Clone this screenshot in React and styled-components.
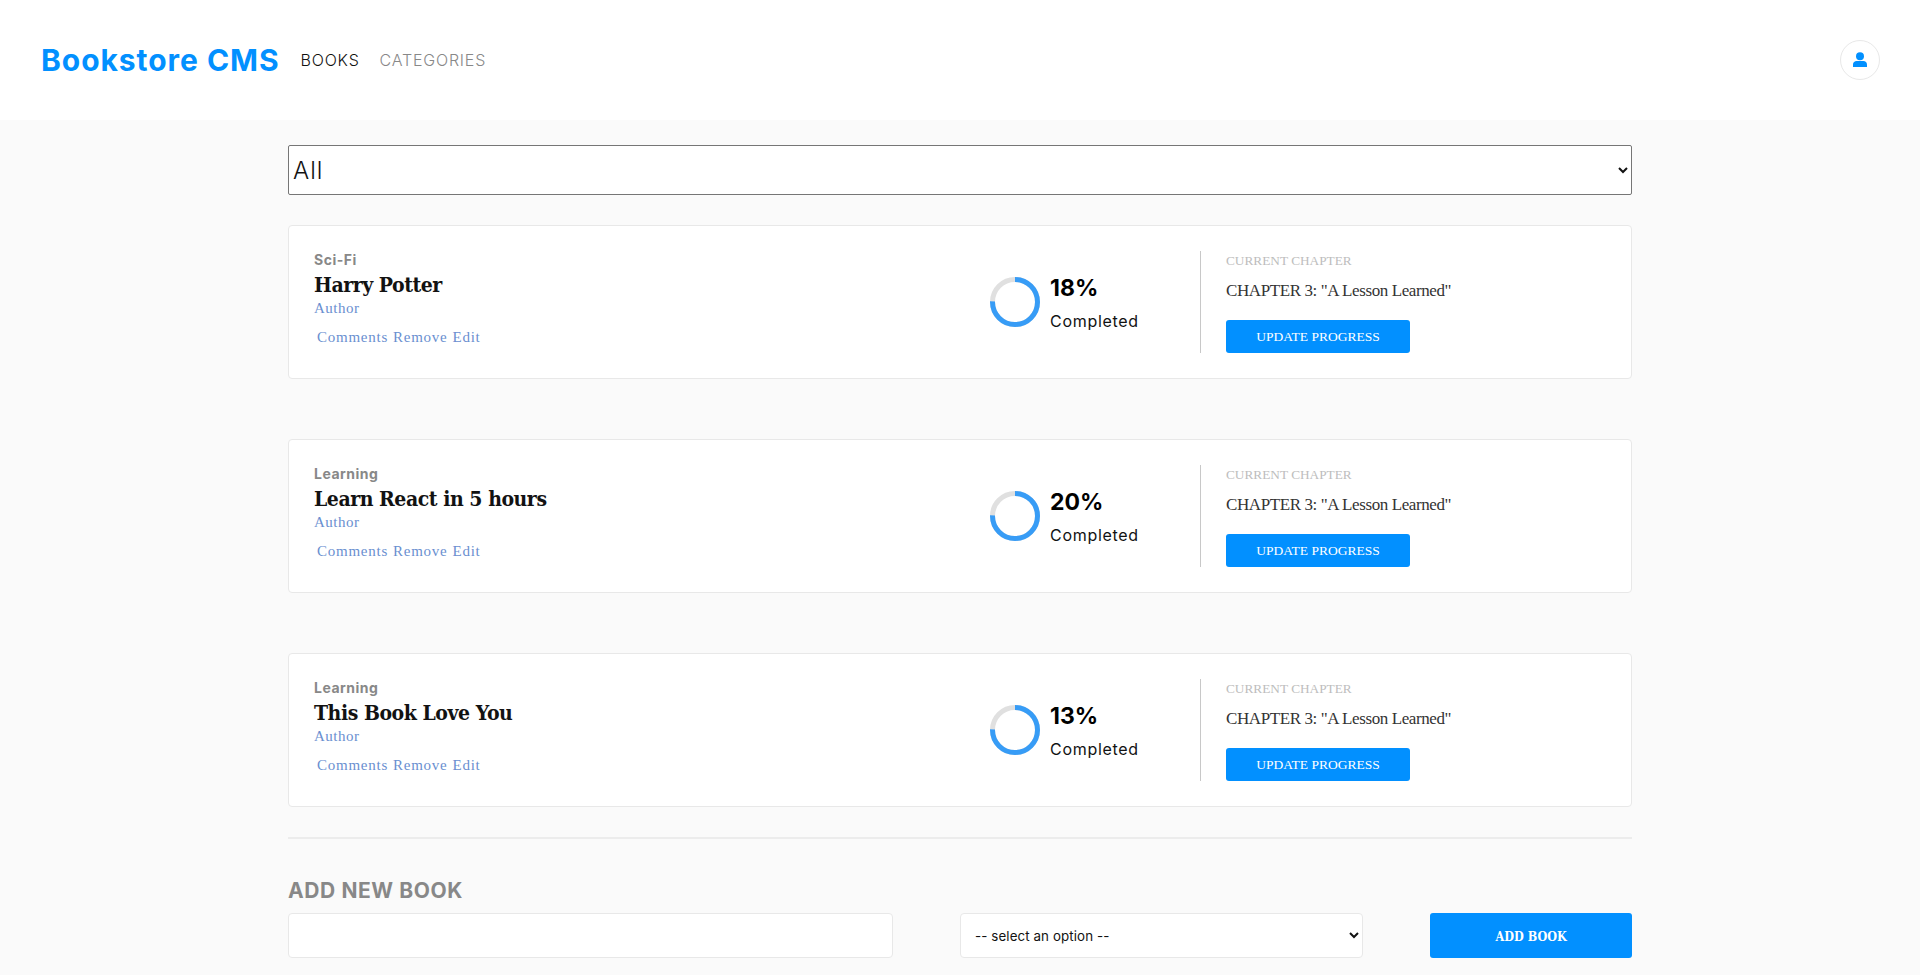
import React from "react";
import styled, { createGlobalStyle } from "styled-components";

const sans = `"Inter", "Noto Sans", sans-serif`;
const slab = `"DejaVu Serif Condensed", "DejaVu Serif", serif`;
const thinSlab = `"Liberation Serif", "DejaVu Serif", serif`;

const GlobalStyle = createGlobalStyle`
  html, body {
    margin: 0;
    padding: 0;
    background: #fafafa;
    overflow: hidden;
  }
`;

const Header = styled.header`
  display: flex;
  align-items: center;
  height: 120px;
  padding: 0 40px 0 41px;
  background: #fff;
  font-family: ${sans};
`;

const Logo = styled.h1`
  margin: 0 21px 0 0;
  font-size: 30px;
  font-weight: 700;
  letter-spacing: 0.95px;
  color: #0290ff;
`;

const NavLink = styled.a`
  margin-right: 20px;
  font-size: 16px;
  font-weight: 300;
  letter-spacing: 0.8px;
  color: ${(p) => (p.$active ? "#121212" : "#888")};
`;

const Profile = styled.div`
  display: flex;
  align-items: center;
  justify-content: center;
  box-sizing: border-box;
  width: 40px;
  height: 40px;
  margin-left: auto;
  border: 1px solid #e8e8e8;
  border-radius: 50%;
`;

const Main = styled.main`
  width: 1344px;
  margin: 0 auto;
  padding-top: 25px;
`;

const Filter = styled.select`
  display: block;
  width: 100%;
  height: 50px;
  background: #fff;
  border: 1px solid #767676;
  border-radius: 2px;
  font-family: ${sans};
  font-size: 24px;
  font-weight: 300;
  letter-spacing: 1px;
  color: #121212;
`;

const BookList = styled.div`
  display: flex;
  flex-direction: column;
  gap: 60px;
  margin-top: 30px;
`;

const Card = styled.article`
  display: flex;
  box-sizing: border-box;
  height: 154px;
  padding: 25px;
  background: #fff;
  border: 1px solid #e8e8e8;
  border-radius: 4px;
`;

const Info = styled.div`
  flex: 1;
`;

const Category = styled.div`
  font-family: ${sans};
  font-size: 14px;
  line-height: 18px;
  font-weight: 700;
  letter-spacing: 0.5px;
  color: #888;
`;

const Title = styled.h2`
  margin: 3px 0 1px;
  font-family: ${slab};
  font-size: 21px;
  line-height: 26px;
  font-weight: 700;
  letter-spacing: -0.45px;
  color: #121212;
`;

const Author = styled.div`
  font-family: ${thinSlab};
  font-size: 15px;
  line-height: 18px;
  letter-spacing: 0.5px;
  color: #6a8fd0;
`;

const Actions = styled.div`
  display: flex;
  gap: 5px;
  margin-top: 11px;
  padding-left: 3px;
`;

const Action = styled.a`
  font-family: ${thinSlab};
  font-size: 15px;
  line-height: 18px;
  letter-spacing: 0.75px;
  color: #6a8fd0;
`;

const Progress = styled.div`
  display: flex;
  align-items: center;
  gap: 10px;
  box-sizing: border-box;
  width: 211px;
  border-right: 1px solid #c8c8c8;
`;

const Ring = styled.svg`
  display: block;
  flex: none;
`;

const Percent = styled.div`
  font-family: ${sans};
  font-size: 23px;
  line-height: 30px;
  font-weight: 700;
  color: #000;
`;

const Completed = styled.div`
  margin-top: 8px;
  font-family: ${sans};
  font-size: 16px;
  line-height: 20px;
  font-weight: 400;
  letter-spacing: 0.7px;
  color: #121212;
`;

const Chapter = styled.div`
  box-sizing: border-box;
  width: 405px;
  padding-left: 25px;
`;

const ChapterLabel = styled.div`
  padding-top: 1px;
  font-family: ${thinSlab};
  font-size: 13.3px;
  line-height: 18px;
  color: #bdbdbd;
`;

const ChapterName = styled.div`
  margin-top: 11px;
  font-family: ${thinSlab};
  font-size: 17px;
  line-height: 20px;
  letter-spacing: -0.4px;
  color: #333;
`;

const UpdateButton = styled.button`
  display: block;
  width: 184px;
  height: 33px;
  margin-top: 19px;
  padding: 1px 0 0;
  border: 0;
  border-radius: 3px;
  background: #0290ff;
  font-family: ${thinSlab};
  font-size: 13.5px;
  color: #fff;
`;

const Rule = styled.hr`
  height: 2px;
  margin: 30px 0 0;
  border: 0;
  background: #ececec;
`;

const FormTitle = styled.h3`
  margin: 40px 0 10px;
  font-family: ${sans};
  font-size: 21px;
  line-height: 24px;
  font-weight: 700;
  letter-spacing: 0.6px;
  color: #888;
`;

const Form = styled.form`
  display: flex;
  justify-content: space-between;
`;

const TextInput = styled.input`
  box-sizing: border-box;
  width: 45%;
  height: 45px;
  background: #fff;
  border: 1px solid #e8e8e8;
  border-radius: 4px;
`;

const CategorySelect = styled.select`
  box-sizing: border-box;
  width: 30%;
  height: 45px;
  padding-left: 10px;
  background: #fff;
  border: 1px solid #e8e8e8;
  border-radius: 4px;
  font-family: ${sans};
  font-size: 13.33px;
  letter-spacing: 0.1px;
  color: #121212;
`;

const AddButton = styled.button`
  width: 15%;
  height: 45px;
  padding: 1px 0 0;
  border: 0;
  border-radius: 3px;
  background: #0290ff;
  font-family: ${slab};
  font-size: 12.5px;
  font-weight: 700;
  color: #fff;
`;

const books = [
  { category: "Sci-Fi", title: "Harry Potter", percent: 18 },
  { category: "Learning", title: "Learn React in 5 hours", percent: 20 },
  { category: "Learning", title: "This Book Love You", percent: 13 },
];

function ProgressRing() {
  const radius = 22.5;
  const length = 2 * Math.PI * radius;
  return (
    <Ring width="50" height="50" viewBox="0 0 50 50">
      <circle cx="25" cy="25" r={radius} fill="none" stroke="#e0e0e0" strokeWidth="5" />
      <circle
        cx="25"
        cy="25"
        r={radius}
        fill="none"
        stroke="#379cf6"
        strokeWidth="5"
        strokeDasharray={`${length * 0.75} ${length}`}
        transform="rotate(-90 25 25)"
      />
    </Ring>
  );
}

function BookCard({ book }) {
  return (
    <Card>
      <Info>
        <Category>{book.category}</Category>
        <Title>{book.title}</Title>
        <Author>Author</Author>
        <Actions>
          <Action>Comments</Action>
          <Action>Remove</Action>
          <Action>Edit</Action>
        </Actions>
      </Info>
      <Progress>
        <ProgressRing />
        <div>
          <Percent>{book.percent}%</Percent>
          <Completed>Completed</Completed>
        </div>
      </Progress>
      <Chapter>
        <ChapterLabel>CURRENT CHAPTER</ChapterLabel>
        <ChapterName>CHAPTER 3: "A Lesson Learned"</ChapterName>
        <UpdateButton type="button">UPDATE PROGRESS</UpdateButton>
      </Chapter>
    </Card>
  );
}

export default function App() {
  return (
    <>
      <GlobalStyle />
      <Header>
        <Logo>Bookstore CMS</Logo>
        <NavLink $active>BOOKS</NavLink>
        <NavLink>CATEGORIES</NavLink>
        <Profile>
          <svg width="16" height="16" viewBox="0 0 16 16">
            <circle cx="8" cy="4.2" r="4" fill="#0290ff" />
            <path d="M1 15v-2.6C1 10.4 2.6 9 4.6 9h6.8c2 0 3.6 1.4 3.6 3.4V15z" fill="#0290ff" />
          </svg>
        </Profile>
      </Header>
      <Main>
        <Filter defaultValue="All">
          <option>All</option>
        </Filter>
        <BookList>
          {books.map((book) => (
            <BookCard key={book.title} book={book} />
          ))}
        </BookList>
        <Rule />
        <FormTitle>ADD NEW BOOK</FormTitle>
        <Form>
          <TextInput type="text" />
          <CategorySelect defaultValue="">
            <option value="">-- select an option --</option>
          </CategorySelect>
          <AddButton type="button">ADD BOOK</AddButton>
        </Form>
      </Main>
    </>
  );
}
